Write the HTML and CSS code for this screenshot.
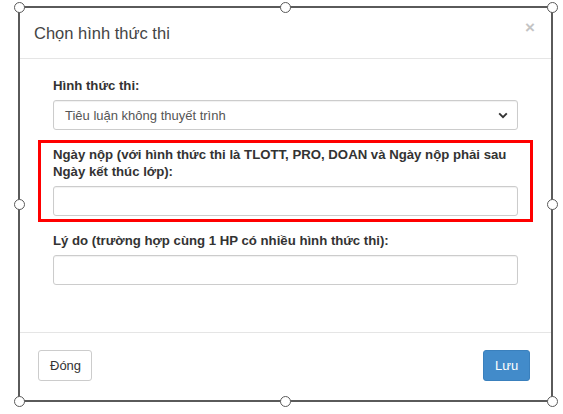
FILE: index.html
```html
<!DOCTYPE html>
<html lang="vi">
<head>
    <meta charset="UTF-8">
    <meta name="viewport" content="width=device-width, initial-scale=1.0">
    <title>Chọn hình thức thi</title>
    <link rel="stylesheet" href="styles.css">
</head>
<body>
    <div class="frame">
        <!-- Selection handles -->
        <span class="handle h-tl"></span>
        <span class="handle h-tc"></span>
        <span class="handle h-tr"></span>
        <span class="handle h-ml"></span>
        <span class="handle h-mr"></span>
        <span class="handle h-bl"></span>
        <span class="handle h-bc"></span>
        <span class="handle h-br"></span>

        <div class="modal-header">
            <h4 class="modal-title">Chọn hình thức thi</h4>
            <button class="close">×</button>
        </div>

        <div class="modal-body">
            <div class="form-group">
                <label>Hình thức thi:</label>
                <div class="form-control select">
                    <span>Tiêu luận không thuyết trình</span>
                    <svg width="10" height="7" viewBox="0 0 10 7">
                        <path d="M1.2 1.4 L5 5.2 L8.8 1.4" fill="none" stroke="#333" stroke-width="1.9"/>
                    </svg>
                </div>
            </div>

            <div class="form-group highlight">
                <label>Ngày nộp (với hình thức thi là TLOTT, PRO, DOAN và Ngày nộp phải sau Ngày kết thúc lớp):</label>
                <div class="form-control"></div>
            </div>

            <div class="form-group">
                <label>Lý do (trường hợp cùng 1 HP có nhiều hình thức thi):</label>
                <div class="form-control"></div>
            </div>
        </div>

        <div class="modal-footer">
            <button class="btn btn-default">Đóng</button>
            <button class="btn btn-primary">Lưu</button>
        </div>
    </div>
</body>
</html>
```

FILE: styles.css
```css
:root {
    --frame: #5a5a5a;
    --text-main: #333333;
    --text-input: #555555;
    --border: #cccccc;
    --divider: #e5e5e5;
    --primary: #428bca;
}

* {
    box-sizing: border-box;
}

body {
    margin: 0;
    width: 563px;
    height: 414px;
    background: #ffffff;
    color: var(--text-main);
    font-family: "Liberation Sans", Arial, sans-serif;
    overflow: hidden;
}

.frame {
    position: relative;
    margin: 6px 0 0 18px;
    width: 535px;
    height: 396px;
    border: 2px solid var(--frame);
    background: #ffffff;
}

.handle {
    position: absolute;
    width: 11px;
    height: 11px;
    border: 1.6px solid var(--frame);
    border-radius: 50%;
    background: #ffffff;
    z-index: 2;
}

.h-tl { left: -6.5px; top: -6.5px; }
.h-tc { left: calc(50% - 5.5px); top: -6.5px; }
.h-tr { right: -6.5px; top: -6.5px; }
.h-ml { left: -6.5px; top: calc(50% - 5.5px); }
.h-mr { right: -6.5px; top: calc(50% - 5.5px); }
.h-bl { left: -6.5px; bottom: -6.5px; }
.h-bc { left: calc(50% - 5.5px); bottom: -6.5px; }
.h-br { right: -6.5px; bottom: -6.5px; }

.modal-header {
    display: flex;
    justify-content: space-between;
    align-items: center;
    height: 51px;
    padding: 0 16px 0 14px;
    border-bottom: 1px solid var(--divider);
}

.modal-title {
    margin: 0;
    font-size: 16.5px;
    font-weight: normal;
    color: #444444;
}

.close {
    align-self: flex-start;
    margin-top: 10px;
    padding: 0;
    background: none;
    border: none;
    font-family: inherit;
    font-size: 17px;
    font-weight: bold;
    line-height: 20px;
    color: #c4c4c4;
}

.modal-body {
    padding: 12px 18px 37px;
}

.form-group {
    padding: 3px 12px;
    margin-bottom: 4px;
    border: 3px solid transparent;
}

.form-group.highlight {
    border-color: #ff0000;
}

label {
    display: block;
    margin-bottom: 6px;
    font-size: 13.2px;
    font-weight: bold;
    line-height: 17px;
    color: var(--text-main);
}

.form-control {
    height: 30px;
    border: 1px solid var(--border);
    border-radius: 3px;
    box-shadow: inset 0 1px 1px rgba(0, 0, 0, 0.06);
    background: #ffffff;
}

.select {
    display: flex;
    justify-content: space-between;
    align-items: center;
    padding: 0 9px 0 11px;
    font-size: 13px;
    color: var(--text-input);
}

.modal-footer {
    display: flex;
    justify-content: space-between;
    padding: 17px 21px 0 18px;
    border-top: 1px solid var(--divider);
}

.btn {
    height: 31px;
    padding: 0 11px;
    border-radius: 3px;
    font-family: inherit;
    font-size: 13px;
}

.btn-default {
    width: 54px;
    background: #ffffff;
    border: 1px solid var(--border);
    color: var(--text-main);
}

.btn-primary {
    width: 47px;
    background: var(--primary);
    border: 1px solid #3a80bd;
    color: #ffffff;
}
```
